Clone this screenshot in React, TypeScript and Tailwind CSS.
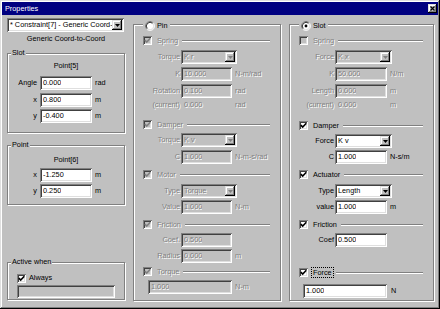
import React from "react";

const SUNKEN =
  "shadow-[inset_1px_1px_0_#808080,inset_-1px_-1px_0_#ffffff,inset_2px_2px_0_#404040,inset_-2px_-2px_0_#dfdfdf]";
const RAISED =
  "shadow-[inset_-1px_-1px_0_#000000,inset_1px_1px_0_#dfdfdf,inset_-2px_-2px_0_#808080,inset_2px_2px_0_#ffffff]";
const GROUP =
  "border border-[#808080] shadow-[inset_1px_1px_0_#ffffff,1px_1px_0_#ffffff]";
const DIS = "text-[#808080] [text-shadow:1px_1px_0_#ffffff]";

function Check({ checked, disabled }: { checked?: boolean; disabled?: boolean }) {
  return (
    <div
      className={`w-[9px] h-[9px] shrink-0 flex items-center justify-center ${SUNKEN} ${
        disabled ? "bg-[#c0c0c0]" : "bg-white"
      }`}
    >
      {checked && (
        <svg width="7" height="7" viewBox="0 0 7 7" className="block">
          <path
            d="M0.8 3.1 L2.7 5.1 L6.3 1.3"
            fill="none"
            stroke={disabled ? "#808080" : "#000000"}
            strokeWidth="1.6"
          />
        </svg>
      )}
    </div>
  );
}

function Radio({ checked }: { checked?: boolean }) {
  return (
    <svg width="10" height="10" viewBox="0 0 12 12" className="block shrink-0">
      <circle cx="6" cy="6" r="4.6" fill="#ffffff" />
      <path d="M2.11 9.89 A5.5 5.5 0 0 1 9.89 2.11" fill="none" stroke="#808080" strokeWidth="1" />
      <path d="M9.89 2.11 A5.5 5.5 0 0 1 2.11 9.89" fill="none" stroke="#ffffff" strokeWidth="1" />
      <path d="M2.82 9.18 A4.5 4.5 0 0 1 9.18 2.82" fill="none" stroke="#000000" strokeWidth="1" />
      <path d="M9.18 2.82 A4.5 4.5 0 0 1 2.82 9.18" fill="none" stroke="#dfdfdf" strokeWidth="1" />
      {checked && <circle cx="6" cy="6" r="1.7" fill="#000000" />}
    </svg>
  );
}

function Field({ value, w, disabled }: { value: string; w: string; disabled?: boolean }) {
  return (
    <div
      className={`${w} h-[14px] shrink-0 flex items-center pl-[3px] ${SUNKEN} ${
        disabled ? "bg-[#c0c0c0]" : "bg-white"
      }`}
    >
      <span className={`whitespace-nowrap overflow-hidden ${disabled ? DIS : "text-black"}`}>{value}</span>
    </div>
  );
}

function Combo({ value, w, disabled }: { value: string; w: string; disabled?: boolean }) {
  return (
    <div
      className={`${w} h-[14px] shrink-0 flex items-center ${SUNKEN} ${
        disabled ? "bg-[#c0c0c0]" : "bg-white"
      }`}
    >
      <span
        className={`flex-1 min-w-0 pl-[3px] overflow-hidden whitespace-nowrap ${disabled ? DIS : "text-black"}`}
      >
        {value}
      </span>
      <div
        className={`w-[10px] h-[10px] mr-[2px] shrink-0 bg-[#c0c0c0] flex items-center justify-center ${RAISED}`}
      >
        <svg width="5" height="3" viewBox="0 0 5 3" className="block">
          <path d="M0 0H5L2.5 3Z" fill={disabled ? "#808080" : "#000000"} />
        </svg>
      </div>
    </div>
  );
}

function Header({
  mt,
  label,
  checked,
  boxDis,
  textDis,
  focus,
}: {
  mt: string;
  label: string;
  checked?: boolean;
  boxDis?: boolean;
  textDis?: boolean;
  focus?: boolean;
}) {
  return (
    <div className={`${mt} h-[11px] shrink-0 flex items-center`}>
      <Check checked={checked} disabled={boxDis} />
      <span
        className={`ml-[5px] whitespace-nowrap ${textDis ? DIS : ""} ${
          focus ? "outline-1 outline-dotted outline-black outline-offset-1" : ""
        }`}
      >
        {label}
      </span>
      <div className="flex-1 ml-[4px] h-0 border-t border-t-[#808080] border-b border-b-white" />
    </div>
  );
}

function Row({
  mt,
  lw,
  label,
  dis,
  unit,
  children,
}: {
  mt: string;
  lw: string;
  label: string;
  dis?: boolean;
  unit?: string;
  children: React.ReactNode;
}) {
  return (
    <div className={`${mt} h-[14px] shrink-0 flex items-center`}>
      <span className={`${lw} shrink-0 text-right pr-[1px] whitespace-nowrap ${dis ? DIS : ""}`}>{label}</span>
      {children}
      {unit && <span className={`ml-[3px] whitespace-nowrap ${dis ? DIS : ""}`}>{unit}</span>}
    </div>
  );
}

function LeftRow({ mt, label, value, unit }: { mt: string; label: string; value: string; unit: string }) {
  return (
    <div className={`${mt} h-[14px] shrink-0 flex items-center`}>
      <span className="w-[32px] shrink-0 text-right pr-[3px]">{label}</span>
      <Field value={value} w="w-[52px]" />
      <span className="ml-[3px]">{unit}</span>
    </div>
  );
}

function Legend({ label }: { label: string }) {
  return (
    <div className="-mt-[6px] ml-[3px] px-[1px] h-[10px] self-start flex items-center bg-[#c0c0c0]">{label}</div>
  );
}

export default function App() {
  return (
    <div
      className={`w-[440px] h-[309px] bg-[#c0c0c0] p-[2px] flex flex-col overflow-hidden font-['Liberation_Sans',Arial,sans-serif] text-[7.3px] leading-none text-black ${RAISED}`}
    >
      {/* Title bar */}
      <div className="h-[13px] shrink-0 bg-[#000080] flex items-center pl-[3px] pr-[1px] text-white">
        <span>Properties</span>
        <div className={`ml-auto w-[9px] h-[9px] bg-[#c0c0c0] flex items-center justify-center ${RAISED}`}>
          <svg width="5" height="5" viewBox="0 0 5 5" className="block">
            <path d="M0.5 0.5L4.5 4.5M4.5 0.5L0.5 4.5" stroke="#000000" strokeWidth="1.2" />
          </svg>
        </div>
      </div>

      <div className="flex pl-[5px]">
        {/* Left column */}
        <div className="w-[118px] shrink-0 flex flex-col">
          <div className="mt-[3px]">
            <Combo value="* Constraint[7] - Generic Coord-to-Coord" w="w-[117px]" />
          </div>
          <div className="mt-[2px] h-[10px] flex items-center justify-center">Generic Coord-to-Coord</div>

          <div className={`mt-[9px] h-[80px] flex flex-col ${GROUP}`}>
            <Legend label="Slot" />
            <div className="mt-[3px] h-[10px] flex items-center justify-center">Point[5]</div>
            <LeftRow mt="mt-[5px]" label="Angle" value="0.000" unit="rad" />
            <LeftRow mt="mt-[3px]" label="x" value="0.800" unit="m" />
            <LeftRow mt="mt-[2px]" label="y" value="-0.400" unit="m" />
          </div>

          <div className={`mt-[12px] h-[60px] flex flex-col ${GROUP}`}>
            <Legend label="Point" />
            <div className="mt-[5px] h-[10px] flex items-center justify-center">Point[6]</div>
            <LeftRow mt="mt-[3px]" label="x" value="-1.250" unit="m" />
            <LeftRow mt="mt-[2px]" label="y" value="0.250" unit="m" />
          </div>

          <div className={`mt-[57px] h-[38px] flex flex-col ${GROUP}`}>
            <Legend label="Active when" />
            <div className="mt-[6px] ml-[9px] h-[10px] flex items-center">
              <Check checked />
              <span className="ml-[3px]">Always</span>
            </div>
            <div className={`mt-[2px] ml-[9px] w-[98px] h-[13px] bg-[#c0c0c0] ${SUNKEN}`} />
          </div>
        </div>

        {/* Middle: Pin */}
        <div className={`ml-[8px] mt-[9px] w-[148px] h-[277px] shrink-0 flex flex-col pl-[9px] pr-[10px] ${GROUP}`}>
          <div className="-mt-[4px] h-[10px] self-start flex items-center bg-[#c0c0c0] px-[2px]">
            <Radio />
            <span className="ml-[2px]">Pin</span>
          </div>
          <Header mt="mt-[4px]" label="Spring" checked boxDis textDis />
          <Row mt="mt-[4px]" lw="w-[38px]" label="Torque" dis>
            <Combo value="K r" w="w-[56px]" disabled />
          </Row>
          <Row mt="mt-[3px]" lw="w-[38px]" label="K" dis unit="N-m/rad">
            <Field value="10.000" w="w-[51px]" disabled />
          </Row>
          <Row mt="mt-[3px]" lw="w-[38px]" label="Rotation" dis unit="rad">
            <Field value="0.100" w="w-[51px]" disabled />
          </Row>
          <Row mt="mt-0" lw="w-[38px]" label="(current)" dis unit="rad">
            <span className={`w-[51px] pl-[3px] shrink-0 ${DIS}`}>0.000</span>
          </Row>
          <Header mt="mt-[7px]" label="Damper" checked boxDis textDis />
          <Row mt="mt-[3px]" lw="w-[38px]" label="Torque" dis>
            <Combo value="K v" w="w-[56px]" disabled />
          </Row>
          <Row mt="mt-[3px]" lw="w-[38px]" label="C" dis unit="N-m-s/rad">
            <Field value="1.000" w="w-[51px]" disabled />
          </Row>
          <Header mt="mt-[5px]" label="Motor" checked boxDis textDis />
          <Row mt="mt-[4px]" lw="w-[38px]" label="Type" dis>
            <Combo value="Torque" w="w-[56px]" disabled />
          </Row>
          <Row mt="mt-[2px]" lw="w-[38px]" label="Value" dis unit="N-m">
            <Field value="1.000" w="w-[51px]" disabled />
          </Row>
          <Header mt="mt-[5px]" label="Friction" checked boxDis textDis />
          <Row mt="mt-[3px]" lw="w-[38px]" label="Coef." dis>
            <Field value="0.500" w="w-[51px]" disabled />
          </Row>
          <Row mt="mt-[2px]" lw="w-[38px]" label="Radius" dis unit="m">
            <Field value="0.000" w="w-[51px]" disabled />
          </Row>
          <Header mt="mt-[3px]" label="Torque" checked boxDis textDis />
          <div className="mt-[3px] ml-[5px] h-[14px] flex items-center">
            <Field value="1.000" w="w-[84px]" disabled />
            <span className={`ml-[3px] ${DIS}`}>N-m</span>
          </div>
        </div>

        {/* Right: Slot */}
        <div className={`ml-[8px] mt-[9px] w-[145px] h-[277px] shrink-0 flex flex-col pl-[9px] pr-[10px] ${GROUP}`}>
          <div className="-mt-[4px] h-[10px] self-start flex items-center bg-[#c0c0c0] px-[2px]">
            <Radio checked />
            <span className="ml-[2px]">Slot</span>
          </div>
          <Header mt="mt-[4px]" label="Spring" boxDis textDis />
          <Row mt="mt-[4px]" lw="w-[36px]" label="Force" dis>
            <Combo value="K x" w="w-[57px]" disabled />
          </Row>
          <Row mt="mt-[3px]" lw="w-[36px]" label="K" dis unit="N/m">
            <Field value="50.000" w="w-[52px]" disabled />
          </Row>
          <Row mt="mt-[3px]" lw="w-[36px]" label="Length" dis unit="m">
            <Field value="0.000" w="w-[52px]" disabled />
          </Row>
          <Row mt="mt-0" lw="w-[36px]" label="(current)" dis unit="m">
            <span className={`w-[52px] pl-[3px] shrink-0 ${DIS}`}>0.000</span>
          </Row>
          <Header mt="mt-[8px]" label="Damper" checked />
          <Row mt="mt-[3px]" lw="w-[36px]" label="Force">
            <Combo value="K v" w="w-[57px]" />
          </Row>
          <Row mt="mt-[2px]" lw="w-[36px]" label="C" unit="N-s/m">
            <Field value="1.000" w="w-[52px]" />
          </Row>
          <Header mt="mt-[5px]" label="Actuator" checked />
          <Row mt="mt-[4px]" lw="w-[36px]" label="Type">
            <Combo value="Length" w="w-[57px]" />
          </Row>
          <Row mt="mt-[2px]" lw="w-[36px]" label="value" unit="m">
            <Field value="1.000" w="w-[52px]" />
          </Row>
          <Header mt="mt-[5px]" label="Friction" checked />
          <Row mt="mt-[3px]" lw="w-[36px]" label="Coef">
            <Field value="0.500" w="w-[52px]" />
          </Row>
          <Header mt="mt-[20px]" label="Force" checked focus />
          <div className="mt-[6px] ml-[4px] h-[14px] flex items-center">
            <Field value="1.000" w="w-[84px]" />
            <span className="ml-[4px]">N</span>
          </div>
        </div>
      </div>
    </div>
  );
}
